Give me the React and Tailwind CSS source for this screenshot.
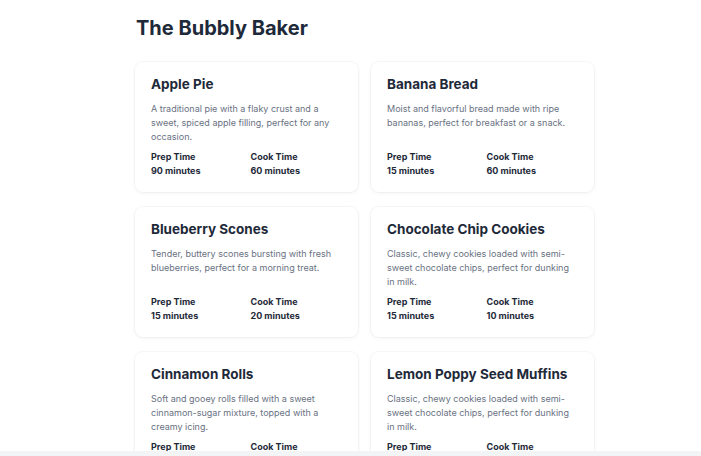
const recipes = [
  {
    name: 'Apple Pie',
    desc: 'A traditional pie with a flaky crust and a sweet, spiced apple filling, perfect for any occasion.',
    prep: '90 minutes',
    cook: '60 minutes',
  },
  {
    name: 'Banana Bread',
    desc: 'Moist and flavorful bread made with ripe bananas, perfect for breakfast or a snack.',
    prep: '15 minutes',
    cook: '60 minutes',
  },
  {
    name: 'Blueberry Scones',
    desc: 'Tender, buttery scones bursting with fresh blueberries, perfect for a morning treat.',
    prep: '15 minutes',
    cook: '20 minutes',
  },
  {
    name: 'Chocolate Chip Cookies',
    desc: 'Classic, chewy cookies loaded with semi-sweet chocolate chips, perfect for dunking in milk.',
    prep: '15 minutes',
    cook: '10 minutes',
  },
  {
    name: 'Cinnamon Rolls',
    desc: 'Soft and gooey rolls filled with a sweet cinnamon-sugar mixture, topped with a creamy icing.',
    prep: '20 minutes',
    cook: '25 minutes',
  },
  {
    name: 'Lemon Poppy Seed Muffins',
    desc: 'Classic, chewy cookies loaded with semi-sweet chocolate chips, perfect for dunking in milk.',
    prep: '15 minutes',
    cook: '20 minutes',
  },
];

function RecipeCard({ recipe }) {
  return (
    <div className="flex flex-col rounded-lg bg-white px-4 pt-[14px] pb-[14px] shadow-[0_0_0_1px_rgba(0,0,0,0.025),0_1px_4px_rgba(0,0,0,0.06)]">
      <h2 className="text-[13.5px] leading-[16px] font-bold text-gray-800">{recipe.name}</h2>
      <p className="mt-[10px] text-[9px] leading-[14px] text-gray-500">{recipe.desc}</p>
      <div className="mt-auto pt-[6px] grid grid-cols-2 gap-2 text-[9px] leading-[14px] font-bold text-gray-800">
        <div>
          <p>Prep Time</p>
          <p>{recipe.prep}</p>
        </div>
        <div>
          <p>Cook Time</p>
          <p>{recipe.cook}</p>
        </div>
      </div>
    </div>
  );
}

export default function App() {
  return (
    <div className="min-h-screen bg-white font-['Inter',sans-serif] pl-[135px] pr-[107px] pt-[14px] pb-10">
      <h1 className="text-[20px] leading-[28px] font-bold text-gray-800 ml-px">The Bubbly Baker</h1>
      <div className="mt-5 grid grid-cols-2 gap-x-[13px] gap-y-[15px]">
        {recipes.map((r) => (
          <RecipeCard key={r.name} recipe={r} />
        ))}
      </div>
      <div className="fixed bottom-0 left-0 w-full h-[5px] bg-gray-100" />
    </div>
  );
}
